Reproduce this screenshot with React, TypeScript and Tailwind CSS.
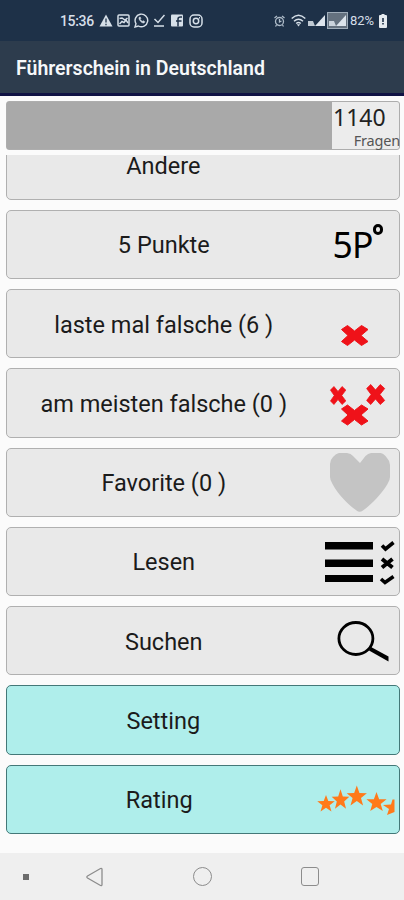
import type { ReactNode } from 'react';

interface MenuItem {
  label: string;
  icon?: ReactNode;
  accent?: boolean;
  labelClass?: string;
}

const CROSS = 'M-13 -6 L-7 -10 L0 -4.5 L7 -10 L13.5 -6 L6.500 0 L13.500 6 L7 10 L0 4.500 L-7 10 L-13 6 L-6.500 0 Z';
const STAR = 'M0 -10 L2.500 -3.200 L9.600 -3 L4 1.400 L6 8.200 L0 4.200 L-6 8.200 L-4 1.400 L-9.600 -3 L-2.500 -3.200 Z';

function Picture({ children }: { children: ReactNode }) {
  return (
    <svg className="block h-[69px] w-[79px] overflow-visible" viewBox="0 0 79 69">
      {children}
    </svg>
  );
}

const items: MenuItem[] = [
  { label: 'Andere', labelClass: 'pr-px' },
  {
    label: '5 Punkte',
    icon: (
      <div className="relative h-full pl-[12px] pt-[8px] font-['Noto_Sans'] text-[35.5px] leading-[50px] tracking-[-1px] text-black">
        5P
        <span className="absolute left-[52px] top-[13px] h-[11px] w-[10px] rounded-full border-[3px] border-black" />
      </div>
    ),
  },
  {
    label: 'laste mal falsche (6 )',
    icon: (
      <Picture>
        <path d={CROSS} fill="#ef1219" stroke="#ef1219" strokeWidth="1" strokeLinejoin="round" transform="translate(33.500 45.500)" />
      </Picture>
    ),
  },
  {
    label: 'am meisten falsche (0 )',
    icon: (
      <Picture>
        <g fill="#ef1219" stroke="#ef1219" strokeWidth="1" strokeLinejoin="round">
          <path d={CROSS} transform="translate(17 26.500) scale(.58 .9)" />
          <path d={CROSS} transform="translate(54.500 25.500) scale(.68 1)" />
          <path d={CROSS} transform="translate(33.500 46)" />
        </g>
      </Picture>
    ),
  },
  {
    label: 'Favorite (0 )',
    icon: (
      <Picture>
        <path
          d="M39 14 L32 7 Q30 4.500 26 4 L18 4 Q15 4.500 12 8 Q9 11 9 15 V28 Q9 31 11.500 35 C17.500 46 26.500 55 35.500 61.500 Q38.500 64 42 61.500 C51 55 60.500 45 66.500 35 Q69 31 69 28 V16 Q69 12 66 9 Q63 4.500 59.500 4 L50 4 Q47 4.500 44.500 7 Z"
          fill="#c4c4c4"
        />
      </Picture>
    ),
  },
  {
    label: 'Lesen',
    icon: (
      <Picture>
        <path d="M4 14h48v7.500H4zM4 31.500h48v7.500H4zM4 47h48v7H4z" />
        <g fill="none" stroke="#000">
          <path d="M61 17.500l3.500 3.500 8-6.500" strokeWidth="3.600" />
          <path d="M61 31l10.500 8.500M71.500 31l-10.500 8.500" strokeWidth="4" />
          <path d="M60 51l4 3.500 8.500-6" strokeWidth="3.600" />
        </g>
      </Picture>
    ),
  },
  {
    label: 'Suchen',
    icon: (
      <Picture>
        <ellipse cx="34.900" cy="31.500" rx="17" ry="16" fill="none" stroke="#000" strokeWidth="2.800" />
        <path d="M50 40 L67.500 49.500 V54.500 L48 43.500 Z" />
      </Picture>
    ),
  },
  { label: 'Setting', accent: true, labelClass: 'pr-px' },
  {
    label: 'Rating',
    accent: true,
    labelClass: 'pr-[9px]',
    icon: (
      <Picture>
        <g fill="#ff7a1a">
          <path d={STAR} transform="translate(5 38) scale(.91)" />
          <path d={STAR} transform="translate(19.500 34) scale(.92 1.080)" />
          <path d={STAR} transform="translate(35.800 30.500) scale(1.050 1.090)" />
          <path d={STAR} transform="translate(55.500 36.500) scale(1.050)" />
          <path d="M73.500 33.500V46L66 49L68 43L62 39L70 38.500L71.500 33.500Z" />
        </g>
      </Picture>
    ),
  },
];

function Signal() {
  return (
    <svg className="block h-[13px] w-[19px]" viewBox="0 0 19 13" fill="#dce4ec">
      <path d="M18 1v11H8z" />
      <path d="M1 7h5l2 5H1z" opacity=".85" />
    </svg>
  );
}

function StatusBar() {
  return (
    <div className="flex h-[41px] items-center bg-[#1e3148] pl-[60px] text-[#d6dfe8]">
      <span className="w-[39px] whitespace-nowrap pt-px text-[14px] font-medium tracking-[-0.35px]">15:36</span>
      <svg className="h-[13px] w-[14px]" viewBox="0 0 14 13">
        <path d="M7 .5 13.500 12.500H.5z" fill="currentColor" />
        <path d="M7 4.500v4M7 9.700v1.500" stroke="#1e3148" strokeWidth="1.300" />
      </svg>
      <svg className="ml-1 h-[13px] w-[13px]" viewBox="0 0 13 13" fill="none" stroke="currentColor" strokeWidth="1.500">
        <rect x="1" y="1" width="11" height="11" rx="1" />
        <path d="M2.500 4.500 5 4l3 2 2.500-2M2.500 10l2.500-2.500 2 1 2-2.500 2 3" />
      </svg>
      <svg className="ml-1 h-[15px] w-[15px]" viewBox="0 0 15 15" fill="none" stroke="currentColor" strokeWidth="1.400">
        <path d="M1 14l1-3.300A6.300 6.300 0 1 1 4.400 13z" />
        <path d="M5 4.500c-.5 2 2.500 5.800 5 5.500l.8-1.300-1.600-1-1 .8-2-2 .6-1-.6-1.500z" fill="currentColor" strokeWidth=".6" />
      </svg>
      <svg className="ml-[4px] h-[13px] w-[12px]" viewBox="0 0 12 13" fill="none" stroke="currentColor" strokeWidth="1.500">
        <path d="M1.500 5 5 8.500 11.500 1M1 12h10" />
      </svg>
      <svg className="ml-[6px] h-[13px] w-[12px]" viewBox="0 0 12 13">
        <rect y=".5" width="12" height="12" rx="1" fill="currentColor" />
        <path d="M7 12.500V5q0-2 2.500-2H11M5 7h5.500" stroke="#1e3148" strokeWidth="1.500" fill="none" />
      </svg>
      <svg className="ml-[6px] h-[14px] w-[14px]" viewBox="0 0 14 14" fill="none" stroke="currentColor" strokeWidth="1.500">
        <rect x="1" y="1" width="12" height="12" rx="4" />
        <circle cx="7" cy="7" r="2.700" />
        <path d="M10 3.700h1" />
      </svg>
      <svg className="ml-[71px] h-[12px] w-[11px]" viewBox="0 0 11 12" fill="none" stroke="#aebbc8" strokeWidth="1.300">
        <circle cx="5.500" cy="6.500" r="4" />
        <path d="M.5 3 3 1M10.500 3 8 1M5.500 4v3l2-1M2.500 10l-1 1.500M8.500 10l1 1.500" />
      </svg>
      <svg className="ml-[6px] h-[13px] w-[15px]" viewBox="0 0 15 13" fill="none" stroke="currentColor" strokeWidth="1.500">
        <path d="M.7 4.500Q7.500-2 14.300 4.500M3 7.300q4.500-4 9 0M5.200 9.500q2.300-2 4.600 0" />
        <path d="M5.800 10.300h3.400L7.500 12.500z" fill="currentColor" stroke="none" />
      </svg>
      <div className="ml-px">
        <Signal />
      </div>
      <div className="ml-px flex h-[17px] w-[21px] items-center border border-[#9eacb9] bg-[#64717f]">
        <Signal />
      </div>
      <span className="ml-[2px] w-[25px] whitespace-nowrap pt-px text-[13px] tracking-[-0.1px]">82%</span>
      <svg className="ml-[4px] h-[14px] w-[8px]" viewBox="0 0 8 14">
        <path d="M2.500 0h3v1H7q1 0 1 1v11q0 1-1 1H1q-1 0-1-1V2q0-1 1-1h1.500z" fill="#e5ebf0" />
        <path d="M4 4v4M4 9v1.500" stroke="#1e3148" strokeWidth="1.600" />
      </svg>
    </div>
  );
}

function MenuRow({ label, icon, accent, labelClass = '' }: MenuItem) {
  return (
    <button
      className={`flex h-[69.3px] w-full shrink-0 items-center rounded-[5px] border-[1.5px] ${
        accent ? 'border-[#437878] bg-[#afeeeb]' : 'border-[#b0b0b0] bg-[#e9e9e9]'
      }`}
    >
      <span className={`w-[314px] whitespace-nowrap pt-[2px] text-center text-[23.5px] leading-7 text-[#1b1b1b] ${labelClass}`}>
        {label}
      </span>
      <span className="block h-full w-[78px] text-left">{icon}</span>
    </button>
  );
}

export default function App() {
  return (
    <div className="flex h-[900px] w-[404px] flex-col overflow-hidden bg-[#fbfbfb] font-[Roboto,sans-serif]">
      <StatusBar />
      <header className="flex h-[55px] items-center border-b-[3px] border-[#101344] bg-[#2d3c4d] pl-4 pt-[3px]">
        <h1 className="whitespace-nowrap text-[19.5px] font-semibold text-[#f6f8fa]">Führerschein in Deutschland</h1>
      </header>

      <div className="ml-[6px] mt-[5px] flex h-[49px] w-[394px] shrink-0 rounded-[3px] border border-[#adadad] bg-[#ececec] font-['Noto_Sans']">
        <div className="w-[325px] shrink-0 bg-[#a9a9a9]" />
        <div className="flex w-[68px] flex-col text-[#222]">
          <span className="pl-px text-[23px] leading-[31px]">1140</span>
          <span className="-mr-px -mt-px self-end whitespace-nowrap text-[14.5px] leading-[16px] tracking-[-0.2px] text-[#555]">Fragen</span>
        </div>
      </div>

      <main className="mt-[5px] flex-1 overflow-hidden pl-[6px] pr-[4.5px]">
        <div className="-mt-[24.7px] flex flex-col gap-[10px]">
          {items.map((item) => (
            <MenuRow key={item.label} {...item} />
          ))}
        </div>
      </main>

      <nav className="flex h-[47px] shrink-0 items-center bg-[#efefef] text-[#8c8c8c]">
        <span className="ml-[23px] h-[6px] w-[6px] bg-[#6c6c6c]" />
        <svg className="ml-[57px] h-[20px] w-[18px]" viewBox="0 0 18 20" fill="none" stroke="currentColor" strokeWidth="1.300">
          <path d="M1.500 9 14.500 1.500q1.500-.5 1.500 1v15q0 1.500-1.500 1L1.500 11q-1.300-1 0-2z" />
        </svg>
        <span className="ml-[89px] h-[19px] w-[19px] rounded-full border-[1.5px] border-current" />
        <span className="ml-[89px] h-[19px] w-[18px] rounded-[3px] border-[1.5px] border-current" />
      </nav>
    </div>
  );
}
